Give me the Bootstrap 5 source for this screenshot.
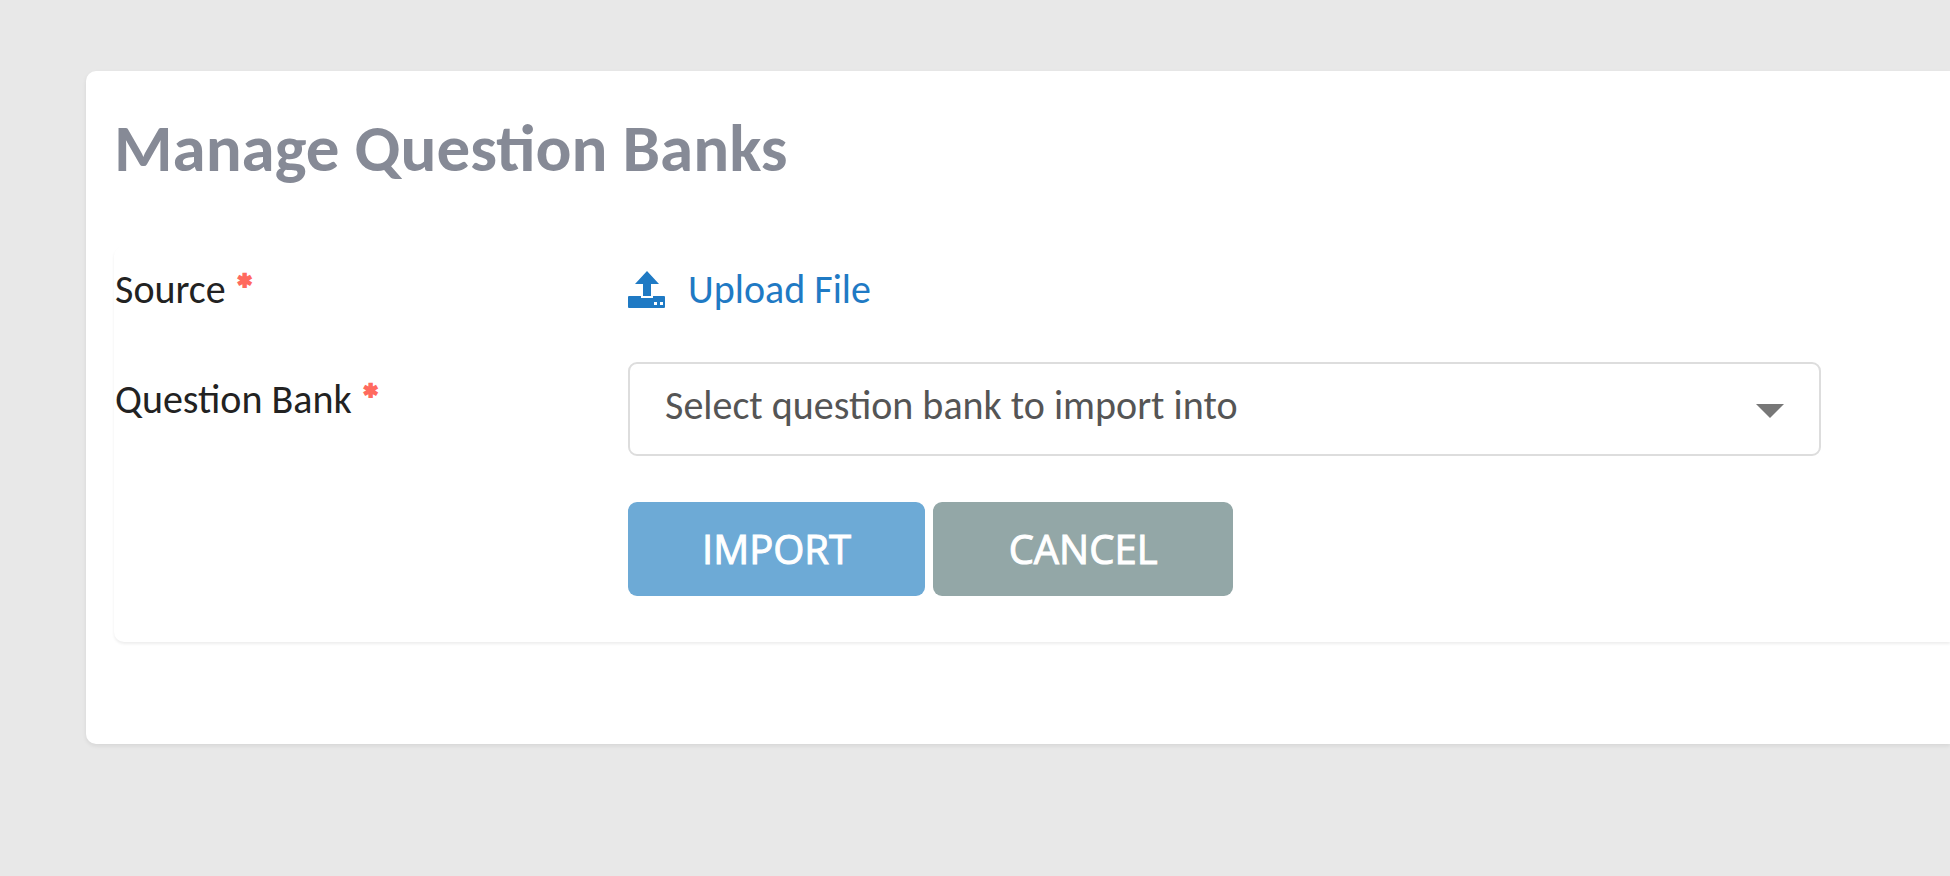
<!DOCTYPE html>
<html lang="en">
<head>
<meta charset="utf-8">
<meta name="viewport" content="width=device-width, initial-scale=1">
<title>Manage Question Banks</title>
<link href="https://cdn.jsdelivr.net/npm/bootstrap@5.3.0/dist/css/bootstrap.min.css" rel="stylesheet">
<style>
  body { background: #e8e8e8; font-family: "Carlito", "Lato", "Open Sans", sans-serif; font-size: 40px; line-height: 48px; color: #222; }
  .page-wrap { padding: 71px 0 71px 86px; }
  .bank-card { background: #fff; border-radius: 10px 0 0 10px; padding: 39px 0 102px 28px; box-shadow: 0 2px 4px rgba(0,0,0,.08); }
  .bank-title { font-size: 67px; line-height: 76px; font-weight: 700; color: #868a96; margin: 0 0 60px; }
  .bank-form { border-radius: 10px 0 0 10px; padding: 20px 0 46px; box-shadow: 0 2px 3px rgba(0,0,0,.07); }
  .source-row { margin-bottom: 48px; }
  .label-col { flex: 0 0 28%; padding-left: 1px; }
  .bank-label { padding-top: 14px; }
  .field-col { flex: 0 0 65%; }
  .required-star { color: #ff6a5e; font-weight: 700; -webkit-text-stroke: 2px #ff6a5e; }
  .upload-link { color: #1f7ac4; gap: 22px; }
  .bank-select { height: 94px; border: 2px solid #ddd; border-radius: 9px; padding: 0 88px 6px 35px; color: #555; font-size: 40px; line-height: 48px;
    background: #fff url("data:image/svg+xml,%3Csvg xmlns='http://www.w3.org/2000/svg' viewBox='0 0 28 14'%3E%3Cpath d='M0 0h28L14 14z' fill='%23777'/%3E%3C/svg%3E") no-repeat right 35px top 40px / 28px 14px; }
  .action-row { margin-top: 46px; }
  .action-btn { height: 94px; border: 0; border-radius: 9px; color: #fff; font-family: "Open Sans", sans-serif; font-size: 40px; line-height: 56px; -webkit-text-stroke: 1px #fff; padding: 0; }
  .btn-import { width: 297px; background: #6daad6; }
  .btn-cancel { width: 300px; background: #93a7a7; }
</style>
</head>
<body>
<main class="page-wrap">
  <section class="bank-card">
    <h1 class="bank-title">Manage Question Banks</h1>
    <form class="bank-form">
      <div class="d-flex source-row">
        <div class="label-col">Source <span class="required-star">*</span></div>
        <div class="field-col">
          <a href="#" class="upload-link d-flex align-items-center text-decoration-none">
            <svg width="38" height="38" viewBox="0 0 38 38" fill="currentColor" aria-hidden="true">
              <path d="M19 0 31 13H23V25H15V13H7Z"/>
              <path fill-rule="evenodd" d="M1 25H13V27H25V25H36Q37 25 37 26V36Q37 37 36 37H1Q0 37 0 36V26Q0 25 1 25ZM26 31V34H29V31ZM32 31V34H35V31Z"/>
            </svg>
            <span>Upload File</span>
          </a>
        </div>
      </div>
      <div class="d-flex">
        <label class="label-col bank-label" for="bank">Question Bank <span class="required-star">*</span></label>
        <div class="field-col">
          <select id="bank" class="form-select bank-select"><option>Select question bank to import into</option></select>
          <div class="d-flex gap-2 action-row">
            <button type="button" class="btn action-btn btn-import">IMPORT</button>
            <button type="button" class="btn action-btn btn-cancel">CANCEL</button>
          </div>
        </div>
      </div>
    </form>
  </section>
</main>
<script src="https://cdn.jsdelivr.net/npm/bootstrap@5.3.0/dist/js/bootstrap.bundle.min.js"></script>
</body>
</html>
